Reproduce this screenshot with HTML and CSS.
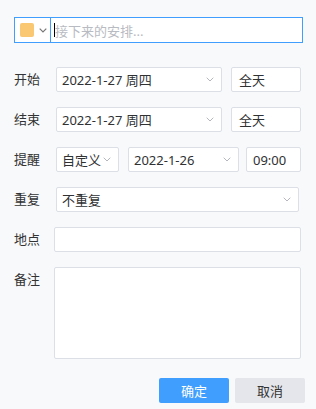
FILE: index.html
```html
<!DOCTYPE html>
<html lang="zh">
<head>
<meta charset="utf-8">
<link rel="stylesheet" href="styles.css">
</head>
<body>
<div class="panel">
  <div class="title-box">
    <div class="color-pick">
      <span class="swatch"></span>
      <svg class="chev dark" width="8" height="5" viewBox="0 0 8 5"><path d="M0.7 0.7 L4 4 L7.3 0.7" fill="none" stroke="currentColor" stroke-width="1.2"/></svg>
    </div>
    <div class="title-input"><span class="caret"></span><span class="placeholder">接下来的安排...</span></div>
  </div>

  <div class="row">
    <div class="label">开始</div>
    <div class="select w166"><span>2022-1-27 周四</span><svg class="chev" width="8" height="5" viewBox="0 0 8 5"><path d="M0.7 0.7 L4 4 L7.3 0.7" fill="none" stroke="currentColor" stroke-width="1"/></svg></div>
    <div class="box w70">全天</div>
  </div>

  <div class="row">
    <div class="label">结束</div>
    <div class="select w166"><span>2022-1-27 周四</span><svg class="chev" width="8" height="5" viewBox="0 0 8 5"><path d="M0.7 0.7 L4 4 L7.3 0.7" fill="none" stroke="currentColor" stroke-width="1"/></svg></div>
    <div class="box w70">全天</div>
  </div>

  <div class="row">
    <div class="label">提醒</div>
    <div class="select w63"><span>自定义</span><svg class="chev" width="8" height="5" viewBox="0 0 8 5"><path d="M0.7 0.7 L4 4 L7.3 0.7" fill="none" stroke="currentColor" stroke-width="1"/></svg></div>
    <div class="select w111"><span>2022-1-26</span><svg class="chev" width="8" height="5" viewBox="0 0 8 5"><path d="M0.7 0.7 L4 4 L7.3 0.7" fill="none" stroke="currentColor" stroke-width="1"/></svg></div>
    <div class="box w55 time">09:00</div>
  </div>

  <div class="row">
    <div class="label">重复</div>
    <div class="select w243"><span>不重复</span><svg class="chev" width="8" height="5" viewBox="0 0 8 5"><path d="M0.7 0.7 L4 4 L7.3 0.7" fill="none" stroke="currentColor" stroke-width="1"/></svg></div>
  </div>

  <div class="row">
    <div class="label">地点</div>
    <div class="input"></div>
  </div>

  <div class="row top">
    <div class="label">备注</div>
    <div class="textarea"></div>
  </div>

  <div class="actions">
    <button class="btn primary">确定</button>
    <button class="btn">取消</button>
  </div>
</div>
</body>
</html>
```

FILE: styles.css
```css
* { box-sizing: border-box; }
html, body {
  margin: 0;
  padding: 0;
  background: #f8f9fb;
}
body {
  width: 316px;
  height: 409px;
  overflow: hidden;
  font-family: "Noto Sans", "Noto Sans CJK SC", sans-serif;
  font-size: 13px;
  color: #303133;
}
.panel {
  padding: 17px 13px 0 14px;
  display: flex;
  flex-direction: column;
}
.title-box {
  display: flex;
  height: 26px;
  width: 289px;
  border: 1px solid #409eff;
  background: #fff;
}
.color-pick {
  width: 36px;
  display: flex;
  align-items: center;
  padding-left: 5px;
  gap: 5px;
  border-right: 1px solid #409eff;
}
.swatch {
  width: 14px;
  height: 14px;
  border-radius: 2px;
  background: #fac772;
}
.chev { color: #b4b7bd; flex: none; }
.chev.dark { color: #777; }
.title-input {
  flex: 1;
  display: flex;
  align-items: center;
  padding-left: 3px;
}
.caret {
  width: 1px;
  height: 14px;
  background: #000;
}
.placeholder {
  color: #b8bbc2;
  font-size: 13px;
}
.row {
  display: flex;
  align-items: center;
  margin-top: 15px;
  gap: 9px;
}
.title-box + .row { margin-top: 24px; }
.row.top { align-items: flex-start; }
.label {
  width: 40px;
  margin-right: -9px;
  color: #333;
  line-height: 25px;
}
.select, .box, .input, .textarea {
  height: 25px;
  background: #fff;
  border: 1px solid #dcdfe6;
  border-radius: 2px;
}
.select {
  display: flex;
  align-items: center;
  justify-content: space-between;
  padding: 0 7px 0 5px;
  margin-left: 2px;
}
.select + .select { margin-left: 0; }
.box {
  display: flex;
  align-items: center;
  padding-left: 7px;
}
.box.time { padding-left: 6px; margin-left: -2px; }
.w166 { width: 166px; }
.w70 { width: 70px; }
.w63 { width: 63px; }
.w111 { width: 111px; }
.w55 { width: 55px; }
.w243 { width: 243px; }
.input { width: 247px; }
.textarea { width: 247px; height: 92px; }
.actions {
  display: flex;
  justify-content: flex-end;
  gap: 6px;
  margin-top: 19px;
  margin-right: -2px;
}
.btn {
  width: 70px;
  height: 25px;
  border: none;
  border-radius: 2px;
  background: #e4e6eb;
  color: #333;
  font-family: "Noto Sans", "Noto Sans CJK SC", sans-serif;
  font-size: 13px;
  padding: 0;
}
.btn.primary {
  background: #409eff;
  color: #fff;
}
```
